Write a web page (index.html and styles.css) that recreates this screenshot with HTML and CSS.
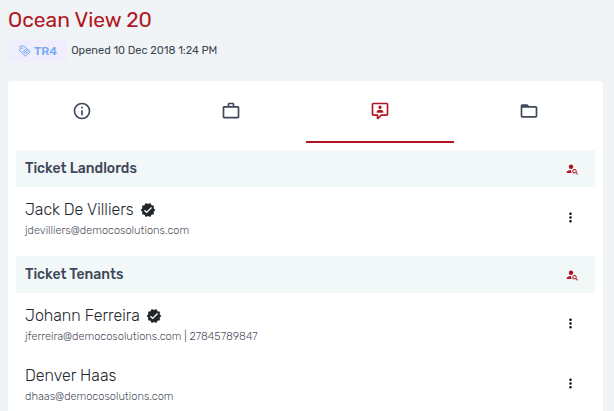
FILE: index.html
```html
<!DOCTYPE html>
<html lang="en">
<head>
  <meta charset="UTF-8" />
  <meta name="viewport" content="width=device-width, initial-scale=1.0"/>
  <title>Ocean View 20</title>
  <link rel="stylesheet" href="styles.css">
</head>
<body>

  <!-- Shared icons -->
  <svg class="sprite" aria-hidden="true">
    <symbol id="verified" viewBox="0 0 24 24">
      <path d="M23,12L20.56,9.22L20.9,5.54L17.29,4.72L15.4,1.54L12,3L8.6,1.54L6.71,4.72L3.1,5.53L3.44,9.21L1,12L3.44,14.78L3.1,18.47L6.71,19.29L8.6,22.47L12,21L15.4,22.46L17.29,19.28L20.9,18.46L20.56,14.78L23,12M10,17L6,13L7.41,11.59L10,14.17L16.59,7.58L18,9L10,17Z"/>
    </symbol>
    <symbol id="person-search" viewBox="0 0 24 24">
      <path d="M10,3A4.5,4.5 0 1,1 10,12A4.5,4.5 0 1,1 10,3M1,20C1,16 4.5,14 10.3,14A6.5,6.5 0 0,0 11.5,20ZM17,12A4.5,4.5 0 0,1 20.9,18.8L24,21.9L22.6,23.3L19.5,20.2A4.5,4.5 0 1,1 17,12M17,14A2.5,2.5 0 1,0 17,19A2.5,2.5 0 1,0 17,14Z"/>
    </symbol>
    <symbol id="dots" viewBox="0 0 24 24">
      <path d="M12,16A2,2 0 0,1 14,18A2,2 0 0,1 12,20A2,2 0 0,1 10,18A2,2 0 0,1 12,16M12,10A2,2 0 0,1 14,12A2,2 0 0,1 12,14A2,2 0 0,1 10,12A2,2 0 0,1 12,10M12,4A2,2 0 0,1 14,6A2,2 0 0,1 12,8A2,2 0 0,1 10,6A2,2 0 0,1 12,4Z"/>
    </symbol>
  </svg>

  <header class="page-header">
    <h1>Ocean View 20</h1>
    <div class="meta">
      <span class="badge">
        <svg class="tag-icon" viewBox="0 0 24 24" fill="none" stroke="currentColor" stroke-width="2">
          <path d="M2 10V3A1 1 0 0 1 3 2H10L22.500 13.500L13 22.500L2 12Z"/>
          <path d="M8 13L13 18L18 13L13 8ZM11 13H15"/>
          <circle cx="6.500" cy="6.500" r="1"/>
        </svg>
        TR4
      </span>
      <span class="opened">Opened 10 Dec 2018 1:24 PM</span>
    </div>
  </header>

  <main class="card">
    <nav class="tabs">
      <button class="tab" aria-label="Details">
        <svg viewBox="0 0 24 24"><path d="M11,9H13V7H11M12,20C7.59,20 4,16.41 4,12C4,7.59 7.59,4 12,4C16.41,4 20,7.59 20,12C20,16.41 16.41,20 12,20M12,2A10,10 0 0,0 2,12A10,10 0 0,0 12,22A10,10 0 0,0 22,12A10,10 0 0,0 12,2M11,17H13V11H11V17Z"/></svg>
      </button>
      <button class="tab" aria-label="Jobs">
        <svg viewBox="0 0 24 24"><path d="M20,6C20.58,6 21.05,6.2 21.42,6.59C21.8,7 22,7.45 22,8V19C22,19.55 21.8,20 21.42,20.41C21.05,20.8 20.58,21 20,21H4C3.42,21 2.95,20.8 2.58,20.41C2.2,20 2,19.55 2,19V8C2,7.45 2.2,7 2.58,6.59C2.95,6.2 3.42,6 4,6H8V4C8,3.42 8.2,2.95 8.58,2.58C8.95,2.2 9.42,2 10,2H14C14.58,2 15.05,2.2 15.42,2.58C15.8,2.95 16,3.42 16,4V6H20M4,8V19H20V8H4M14,6V4H10V6H14Z"/></svg>
      </button>
      <button class="tab active" aria-label="Contacts">
        <svg viewBox="0 0 24 24"><path d="M4,2H20A2,2 0 0,1 22,4V16A2,2 0 0,1 20,18H13.9L10.2,21.7C10,21.9 9.7,22 9.5,22H9A1,1 0 0,1 8,21V18H4A2,2 0 0,1 2,16V4A2,2 0 0,1 4,2M4,4V16H10V19.1L13.1,16H20V4H4M12,5.5A2,2 0 1,1 12,9.5A2,2 0 1,1 12,5.5M8,14V13C8,11.500 10,10.500 12,10.500C14,10.500 16,11.500 16,13V14H8Z"/></svg>
      </button>
      <button class="tab" aria-label="Files">
        <svg viewBox="0 0 24 24"><path d="M20,18H4V8H20M20,6H12L10,4H4C2.89,4 2,4.89 2,6V18A2,2 0 0,0 4,20H20A2,2 0 0,0 22,18V8C22,6.89 21.1,6 20,6Z"/></svg>
      </button>
    </nav>

    <section class="group">
      <div class="group-header">
        <h2>Ticket Landlords</h2>
        <button class="icon-btn search" aria-label="Find landlord"><svg><use href="#person-search"/></svg></button>
      </div>
      <div class="contact">
        <div>
          <h3>Jack De Villiers <svg class="verified"><use href="#verified"/></svg></h3>
          <p>jdevilliers@democosolutions.com</p>
        </div>
        <button class="icon-btn" aria-label="More options"><svg><use href="#dots"/></svg></button>
      </div>
    </section>

    <section class="group">
      <div class="group-header">
        <h2>Ticket Tenants</h2>
        <button class="icon-btn search" aria-label="Find tenant"><svg><use href="#person-search"/></svg></button>
      </div>
      <div class="contact">
        <div>
          <h3>Johann Ferreira <svg class="verified"><use href="#verified"/></svg></h3>
          <p>jferreira@democosolutions.com | 27845789847</p>
        </div>
        <button class="icon-btn" aria-label="More options"><svg><use href="#dots"/></svg></button>
      </div>
      <div class="contact">
        <div>
          <h3>Denver Haas</h3>
          <p>dhaas@democosolutions.com</p>
        </div>
        <button class="icon-btn" aria-label="More options"><svg><use href="#dots"/></svg></button>
      </div>
    </section>
  </main>

</body>
</html>
```
FILE: styles.css
```css
* {
  box-sizing: border-box;
}
body {
  font-family: Rubik, Roboto, sans-serif;
  margin: 0;
  padding: 8px 11px 0 8px;
  background: #f0f4f7;
  color: #3d4852;
}
h1, h2, h3, p {
  margin: 0;
}
svg {
  fill: currentColor;
}
button {
  border: none;
  background: none;
  padding: 0;
  color: inherit;
  cursor: pointer;
}
.sprite {
  display: none;
}
.page-header h1 {
  font-size: 21px;
  line-height: 24px;
  font-weight: 400;
  color: #b01722;
}
.meta {
  display: flex;
  align-items: center;
  gap: 4px;
  margin: 7px 0 19px;
}
.badge {
  display: flex;
  align-items: center;
  gap: 3px;
  height: 23px;
  padding: 0 10px 0 11px;
  border-radius: 4px;
  background: #f0eefc;
  color: #75a9f0;
  font-size: 12px;
  font-weight: 500;
}
.tag-icon {
  width: 12px;
  height: 12px;
  fill: none;
}
.opened {
  font-size: 11px;
}
.card {
  background: white;
  border-radius: 4px;
}
.tabs {
  display: grid;
  grid-template-columns: repeat(4, 1fr);
}
.tab {
  display: flex;
  justify-content: center;
  height: 62px;
  padding-top: 20px;
  border-bottom: 2px solid transparent;
  color: #3d4759;
}
.tab svg {
  width: 20px;
  height: 20px;
}
.tab.active {
  color: #b01722;
  border-bottom-color: #b01722;
}
.group {
  padding: 7px 8px 2px;
}
.group-header {
  display: flex;
  align-items: center;
  justify-content: space-between;
  height: 37px;
  padding: 0 17px 0 9px;
  background: #f2f8f8;
}
.group-header h2 {
  font-size: 14px;
  font-weight: 500;
  color: #3d4759;
}
.contact {
  display: flex;
  align-items: center;
  justify-content: space-between;
  height: 60px;
  padding: 0 17px 0 9px;
}
.contact h3 {
  display: flex;
  align-items: center;
  gap: 6px;
  margin-top: 6px;
  font-size: 16px;
  line-height: 22px;
  font-weight: 300;
  color: #22262b;
}
.contact p {
  font-size: 11px;
  line-height: 20px;
  font-weight: 300;
  color: #4c5260;
}
.verified {
  width: 16px;
  height: 16px;
}
.icon-btn {
  display: flex;
}
.icon-btn svg {
  width: 15px;
  height: 15px;
}
.icon-btn.search {
  color: #b01722;
}
.icon-btn.search svg {
  width: 12px;
  height: 12px;
}
.contact .icon-btn {
  color: #000;
}
```
